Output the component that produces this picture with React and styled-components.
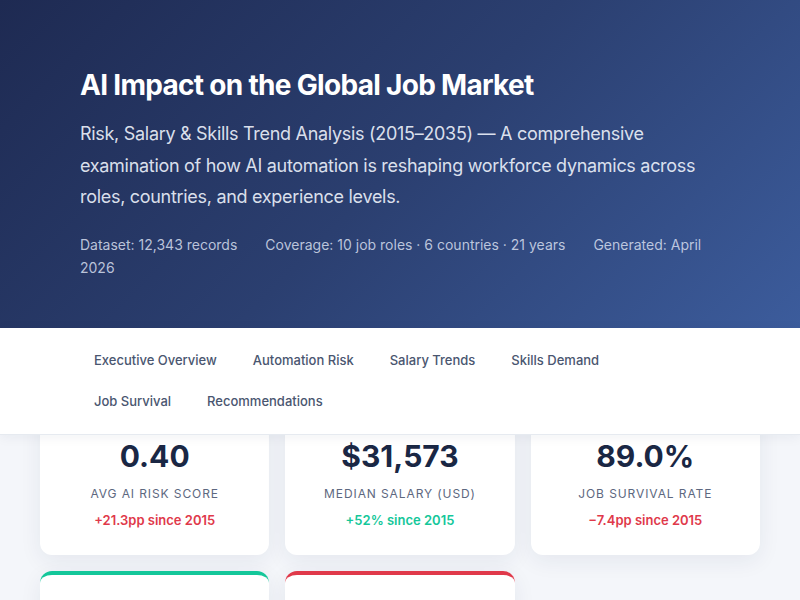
import React from 'react';
import styled, { createGlobalStyle } from 'styled-components';

const GlobalStyle = createGlobalStyle`
  * { box-sizing: border-box; }
  body {
    margin: 0;
    background: #f4f6fa;
    font-family: Inter, "Noto Sans", "Liberation Sans", sans-serif;
    color: #1a2744;
  }
`;

const Hero = styled.header`
  background: linear-gradient(135deg, #1e2a52 0%, #2b3f70 50%, #3c5c9c 100%);
  padding: 68px 80px 49px;
  color: #ffffff;
`;

const Title = styled.h1`
  margin: 0;
  font-size: 28px;
  line-height: 34px;
  font-weight: 700;
  letter-spacing: -0.7px;
`;

const Subtitle = styled.p`
  margin: 16px 0 0;
  font-size: 18px;
  line-height: 1.75;
  letter-spacing: -0.3px;
  color: rgba(236, 241, 250, 0.92);
`;

const Meta = styled.p`
  margin: 20px 0 0;
  font-size: 14px;
  line-height: 23px;
  color: rgba(214, 222, 238, 0.85);
`;

const MetaItem = styled.span`
  margin-right: 28px;
`;

const Nav = styled.nav`
  position: sticky;
  top: 0;
  z-index: 10;
  background: #ffffff;
  padding: 12px 80px;
  border-bottom: 1px solid #e6eaf0;
  box-shadow: 0 2px 12px rgba(20, 30, 60, 0.06);
`;

const NavList = styled.div`
  display: flex;
  flex-wrap: wrap;
  column-gap: 8px;
  max-width: 640px;
`;

const NavButton = styled.button`
  border: none;
  background: transparent;
  font-family: inherit;
  font-size: 13px;
  line-height: 17px;
  font-weight: 500;
  color: #4a5670;
  padding: 12px 14px;
  cursor: pointer;
`;

const Main = styled.main`
  position: relative;
  margin-top: -28px;
  padding: 0 40px 40px;
`;

const Grid = styled.div`
  display: grid;
  grid-template-columns: repeat(3, 1fr);
  gap: 16px;
`;

const Card = styled.div`
  background: #ffffff;
  border-radius: 12px;
  border-top: 4px solid ${p => p.$accent || 'transparent'};
  box-shadow: 0 6px 22px rgba(30, 40, 80, 0.07);
  padding: 27px 24px 26px;
  text-align: center;
  min-height: 148px;
`;

const Value = styled.div`
  font-size: 30px;
  line-height: 36px;
  font-weight: 700;
  color: #1a2744;
`;

const Label = styled.div`
  margin-top: 12px;
  font-size: 12px;
  line-height: 16px;
  letter-spacing: 0.9px;
  text-transform: uppercase;
  color: #5d6880;
`;

const Delta = styled.div`
  margin-top: 10px;
  font-size: 13px;
  line-height: 16px;
  font-weight: 600;
  color: ${p => (p.$up ? '#14c79a' : '#e0394a')};
`;

const tabs = [
  'Executive Overview',
  'Automation Risk',
  'Salary Trends',
  'Skills Demand',
  'Job Survival',
  'Recommendations',
];

const kpis = [
  { value: '0.40', label: 'Avg AI Risk Score', delta: '+21.3pp since 2015', up: false, accent: '#e0394a' },
  { value: '$31,573', label: 'Median Salary (USD)', delta: '+52% since 2015', up: true, accent: '#14c79a' },
  { value: '89.0%', label: 'Job Survival Rate', delta: '\u22127.4pp since 2015', up: false, accent: '#e0394a' },
  { value: '', label: '', delta: '', up: true, accent: '#14c79a' },
  { value: '', label: '', delta: '', up: false, accent: '#e0394a' },
];

export default function App() {
  return (
    <>
      <GlobalStyle />
      <Hero>
        <Title>AI Impact on the Global Job Market</Title>
        <Subtitle>
          Risk, Salary &amp; Skills Trend Analysis (2015–2035) — A comprehensive examination of how AI
          automation is reshaping workforce dynamics across roles, countries, and experience levels.
        </Subtitle>
        <Meta>
          <MetaItem>Dataset: 12,343 records</MetaItem>
          <MetaItem>Coverage: 10 job roles · 6 countries · 21 years</MetaItem>
          <MetaItem>Generated: April 2026</MetaItem>
        </Meta>
      </Hero>
      <Nav>
        <NavList>
          {tabs.map(t => (
            <NavButton key={t}>{t}</NavButton>
          ))}
        </NavList>
      </Nav>
      <Main>
        <Grid>
          {kpis.map((k, i) => (
            <Card key={i} $accent={i < 3 ? 'transparent' : k.accent}>
              {k.value && <Value>{k.value}</Value>}
              {k.label && <Label>{k.label}</Label>}
              {k.delta && <Delta $up={k.up}>{k.delta}</Delta>}
            </Card>
          ))}
        </Grid>
      </Main>
    </>
  );
}
